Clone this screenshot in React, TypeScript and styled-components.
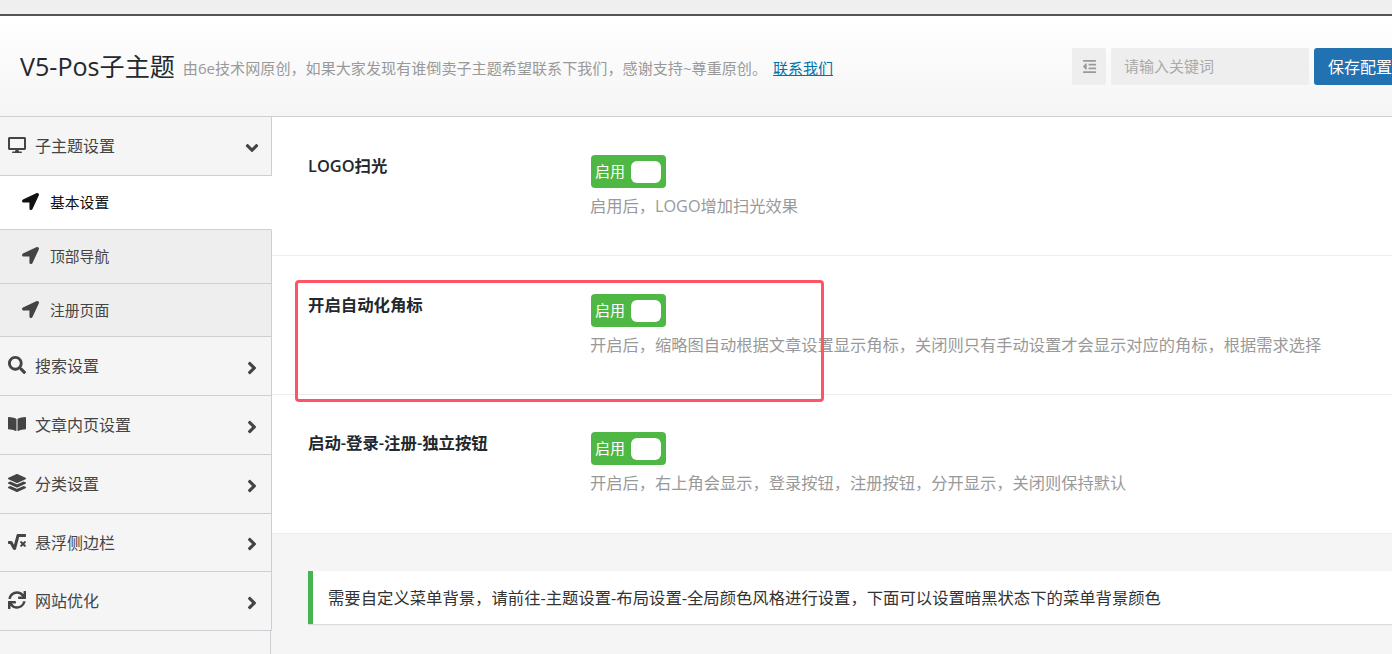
import React from "react";
import styled, { createGlobalStyle } from "styled-components";
import {
  FaAngleDown,
  FaAngleRight,
  FaBookOpen,
  FaDesktop,
  FaLayerGroup,
  FaLocationArrow,
  FaOutdent,
  FaSearch,
  FaSquareRootAlt,
  FaSync,
} from "react-icons/fa";

const GlobalStyle = createGlobalStyle`
  html, body {
    margin: 0;
    padding: 0;
    background: #f5f5f5;
    font-family: "Open Sans", "Noto Sans CJK SC", sans-serif;
  }
  * { box-sizing: border-box; }
`;

const Page = styled.div`
  position: relative;
  width: 1392px;
  height: 654px;
  overflow: hidden;
  background: #f5f5f5;
`;

const TopStrip = styled.div`
  height: 16px;
  background: #efefef;
  border-bottom: 2px solid #555;
`;

const Header = styled.header`
  width: 1412px;
  height: 101px;
  padding-left: 20px;
  display: flex;
  align-items: center;
  justify-content: space-between;
  background: linear-gradient(#fff, #f5f5f5);
  border-bottom: 1px solid #ccd0d4;
`;

const TitleGroup = styled.div`
  display: flex;
  align-items: center;
  padding-bottom: 2px;
`;

const Title = styled.h1`
  margin: 0;
  font-size: 25.1px;
  font-weight: 400;
  color: #23282d;
`;

const Subtitle = styled.span`
  margin-left: 8px;
  padding-top: 4px;
  font-size: 15.1px;
  color: #999;
`;

const ContactLink = styled.a`
  margin-left: 6px;
  padding-top: 4px;
  font-size: 15px;
  color: #0073aa;
  text-decoration: underline;
`;

const Actions = styled.div`
  display: flex;
  align-items: center;
  gap: 5px;
`;

const IconButton = styled.div`
  width: 34px;
  height: 37px;
  display: flex;
  align-items: center;
  justify-content: center;
  background: #eee;
  border-radius: 2px;
  color: #999;
  font-size: 15px;
`;

const SearchBox = styled.div`
  width: 198px;
  height: 37px;
  padding: 0 13px 1px;
  display: flex;
  align-items: center;
  background: #eee;
  border-radius: 2px;
  color: #aaa;
  font-size: 15px;
`;

const SaveButton = styled.button`
  width: 98px;
  height: 37px;
  padding: 0 0 1px 14px;
  border: 0;
  border-radius: 3px;
  background: #2271b1;
  color: #fff;
  font-family: inherit;
  font-size: 16px;
  text-align: left;
`;

const Body = styled.div`
  display: flex;
  align-items: flex-start;
`;

const SideColumn = styled.div`
  width: 271px;
  height: 537px;
  margin-right: 1px;
  flex-shrink: 0;
  border-right: 1px solid #ccd0d4;
`;

const Sidebar = styled.nav`
  width: 272px;
  background: #f5f5f5;
`;

const MenuItem = styled.div<{ $height: number }>`
  height: ${(p) => p.$height}px;
  padding: 0 12px 2px 7px;
  display: flex;
  align-items: center;
  border-right: 1px solid #ccd0d4;
  border-bottom: 1px solid #ccd0d4;
  color: #444;
  font-size: 16px;
`;

const MenuIcon = styled.span`
  width: 19px;
  margin-right: 9px;
  display: flex;
  justify-content: center;
  font-size: 18px;
  color: #444;
`;

const MenuLabel = styled.span`
  flex: 1;
`;

const Caret = styled.span`
  display: flex;
  margin: 5px -3px 0 0;
  font-size: 20px;
  color: #444;
`;

const SubItem = styled.div<{ $active?: boolean; $height: number }>`
  height: ${(p) => p.$height}px;
  padding: 0 0 2px 22px;
  display: flex;
  align-items: center;
  gap: 11px;
  font-size: 14.8px;
  background: ${(p) => (p.$active ? "#fff" : "#eee")};
  color: ${(p) => (p.$active ? "#111" : "#444")};
  border-right: 1px solid ${(p) => (p.$active ? "#fff" : "#ccd0d4")};
  border-bottom: 1px solid #ccd0d4;
`;

const SubIcon = styled.span`
  display: flex;
  font-size: 17px;
`;

const Main = styled.main`
  flex: 1;
  min-width: 0;
`;

const OptionRow = styled.section<{ $top: number }>`
  height: 139px;
  padding: ${(p) => p.$top}px 0 0 36px;
  display: flex;
  background: #fff;
  border-bottom: 1px solid #eee;
`;

const OptionTitle = styled.div`
  width: 283px;
  padding-top: 1px;
  font-size: 16.4px;
  line-height: 20px;
  font-weight: 600;
  color: #23282d;
`;

const OptionBody = styled.div`
  display: flex;
  flex-direction: column;
  align-items: flex-start;
`;

const Toggle = styled.div`
  width: 75px;
  height: 33px;
  padding: 0 5px 2px 4px;
  display: flex;
  align-items: center;
  justify-content: space-between;
  background: #4fb845;
  border-radius: 4px;
  color: #fff;
  font-size: 15px;
`;

const Knob = styled.span`
  width: 30px;
  height: 22px;
  margin-bottom: -2px;
  background: #fff;
  border-radius: 6px;
`;

const Hint = styled.p`
  margin: 8px 0 0 -1px;
  font-size: 16.25px;
  line-height: 20px;
  color: #999;
`;

const Notice = styled.div`
  margin: 37px 0 0 36px;
  height: 53px;
  padding: 0 0 2px 15px;
  display: flex;
  align-items: center;
  background: #fff;
  border-left: 5px solid #46b450;
  box-shadow: 0 1px 1px rgba(0, 0, 0, 0.1);
  font-size: 16.35px;
  color: #333;
`;

const Annotation = styled.div`
  position: absolute;
  left: 295px;
  top: 280px;
  width: 529px;
  height: 122px;
  border: 3px solid #ff5468;
  border-radius: 4px;
  pointer-events: none;
`;

const menus = [
  { label: "搜索设置", icon: <FaSearch />, height: 59 },
  { label: "文章内页设置", icon: <FaBookOpen />, height: 59 },
  { label: "分类设置", icon: <FaLayerGroup />, height: 59 },
  { label: "悬浮侧边栏", icon: <FaSquareRootAlt />, height: 58 },
  { label: "网站优化", icon: <FaSync />, height: 59 },
];

const subMenus = [
  { label: "基本设置", height: 54 },
  { label: "顶部导航", height: 54 },
  { label: "注册页面", height: 53 },
];

const options = [
  { title: "LOGO扫光", hint: "启用后，LOGO增加扫光效果", top: 38 },
  {
    title: "开启自动化角标",
    hint: "开启后，缩略图自动根据文章设置显示角标，关闭则只有手动设置才会显示对应的角标，根据需求选择",
    top: 38,
  },
  {
    title: "启动-登录-注册-独立按钮",
    hint: "开启后，右上角会显示，登录按钮，注册按钮，分开显示，关闭则保持默认",
    top: 37,
  },
];

export default function App() {
  return (
    <Page>
      <GlobalStyle />
      <TopStrip />
      <Header>
        <TitleGroup>
          <Title>V5-Pos子主题</Title>
          <Subtitle>由6e技术网原创，如果大家发现有谁倒卖子主题希望联系下我们，感谢支持~尊重原创。</Subtitle>
          <ContactLink href="#">联系我们</ContactLink>
        </TitleGroup>
        <Actions>
          <IconButton>
            <FaOutdent />
          </IconButton>
          <SearchBox>请输入关键词</SearchBox>
          <SaveButton>保存配置</SaveButton>
        </Actions>
      </Header>
      <Body>
        <SideColumn>
          <Sidebar>
            <MenuItem $height={59}>
              <MenuIcon>
                <FaDesktop />
              </MenuIcon>
              <MenuLabel>子主题设置</MenuLabel>
              <Caret>
                <FaAngleDown />
              </Caret>
            </MenuItem>
            {subMenus.map((item, index) => (
              <SubItem key={item.label} $active={index === 0} $height={item.height}>
                <SubIcon>
                  <FaLocationArrow />
                </SubIcon>
                {item.label}
              </SubItem>
            ))}
            {menus.map((menu) => (
              <MenuItem key={menu.label} $height={menu.height}>
                <MenuIcon>{menu.icon}</MenuIcon>
                <MenuLabel>{menu.label}</MenuLabel>
                <Caret>
                  <FaAngleRight />
                </Caret>
              </MenuItem>
            ))}
          </Sidebar>
        </SideColumn>
        <Main>
          {options.map((option) => (
            <OptionRow key={option.title} $top={option.top}>
              <OptionTitle>{option.title}</OptionTitle>
              <OptionBody>
                <Toggle>
                  启用
                  <Knob />
                </Toggle>
                <Hint>{option.hint}</Hint>
              </OptionBody>
            </OptionRow>
          ))}
          <Notice>需要自定义菜单背景，请前往-主题设置-布局设置-全局颜色风格进行设置，下面可以设置暗黑状态下的菜单背景颜色</Notice>
        </Main>
      </Body>
      <Annotation />
    </Page>
  );
}
